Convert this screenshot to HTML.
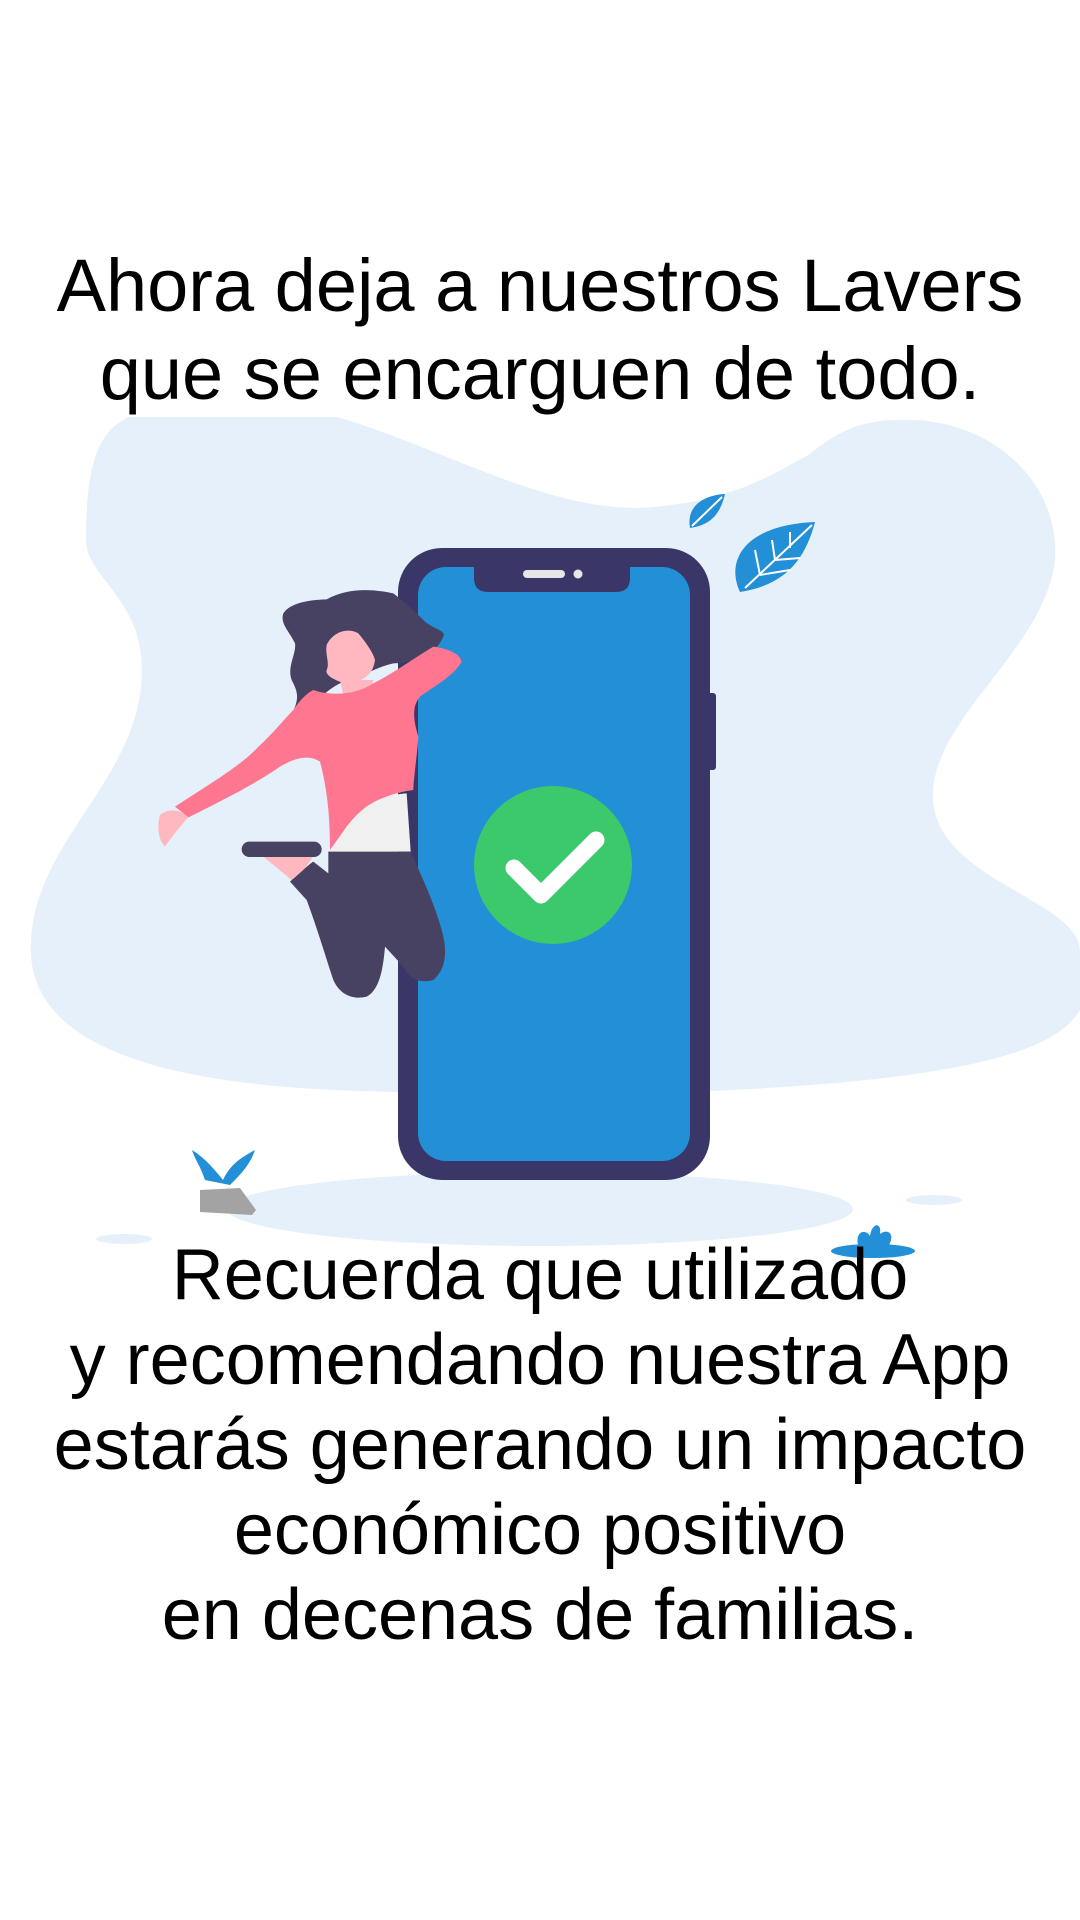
<!DOCTYPE html>
<html><head><meta charset="utf-8"><style>
html,body{margin:0;padding:0;background:#fff;}
body{width:1080px;height:1920px;position:relative;overflow:hidden;font-family:"Liberation Sans","DejaVu Sans",sans-serif;color:#000;}
.t{position:absolute;left:0;width:1080px;text-align:center;font-size:74px;line-height:88px;}
svg{position:absolute;left:0;top:0;}
</style></head><body>
<svg width="1080" height="1920" viewBox="0 0 1080 1920">
<path d="M129 417 L337 417 C450 450 560 520 663 506 C740 498 780 470 810 454 C850 420 880 420 908 420 C990 420 1060 480 1055 560 C1045 650 930 720 933 798 C935 880 1080 900 1080 951 L1080 1010 C1060 1043 1000 1080 687 1092 L405 1092 C200 1090 40 1060 31 957 C25 850 130 790 141 687 C150 600 86 580 86 540 C86 460 100 430 129 417 Z" fill="#e6f0fa"/>
<ellipse cx="540" cy="1209" rx="313" ry="37" fill="#e6f0fa"/>
<ellipse cx="124" cy="1239" rx="28" ry="5" fill="#e6f0fa"/>
<ellipse cx="934" cy="1200" rx="28" ry="5" fill="#e6f0fa"/>
<rect x="706" y="693" width="10" height="77" rx="3" fill="#3a3768"/>
<rect x="398" y="548" width="312" height="632" rx="44" fill="#3a3768"/>
<rect x="418" y="567" width="272" height="594" rx="28" fill="#228fd6"/>
<path d="M474 564 L630 564 L630 578 Q630 592 616 592 L488 592 Q474 592 474 578 Z" fill="#3a3768"/>
<rect x="523" y="570" width="42" height="8" rx="4" fill="#e6e6e6"/>
<circle cx="578" cy="574" r="4.5" fill="#e6e6e6"/>
<circle cx="553" cy="865" r="79" fill="#3bc96b"/>
<path d="M514 868 L541 895 L596 840" stroke="#fff" stroke-width="17" stroke-linecap="round" stroke-linejoin="round" fill="none"/>
<g fill="#228fd6">
<path d="M690 528 C686 505 705 495 725 494 C720 515 710 525 690 528 Z"/>
<path d="M740 592 C725 560 745 525 815 522 C805 560 785 585 740 592 Z"/>
</g>
<g stroke="#fff" stroke-width="2" fill="none">
<path d="M692 526 L722 497"/><path d="M745 588 L812 525 M760 575 L755 550 M775 560 L772 540 M790 548 L790 532 M760 575 L790 570 M775 560 L800 558"/>
</g>
<path d="M205 1180 C200 1165 195 1160 192 1150 C205 1158 215 1170 223 1180 C230 1165 240 1158 255 1150 C250 1165 240 1175 230 1185 Z" fill="#228fd6"/>
<path d="M200 1190 L240 1188 L256 1210 L252 1215 L200 1212 Z" fill="#a3a3a3"/>
<ellipse cx="873" cy="1251" rx="42" ry="7" fill="#228fd6"/>
<path d="M858 1245 C855 1232 865 1228 870 1236 C872 1222 882 1222 880 1234 C888 1228 896 1234 888 1247 Z" fill="#228fd6"/>
<g transform="translate(140,580) scale(0.33333)">
<path d="M430 100 C450 70 500 60 560 58 C620 25 690 25 760 40 C800 70 830 100 850 120 C880 150 920 150 910 170 C890 220 830 250 760 250 C720 260 700 270 660 290 L600 310 C560 330 530 360 520 390 L460 392 C480 350 470 330 455 300 C440 260 470 220 465 190 C445 150 420 130 430 100 Z" fill="#474261"/>
<path d="M600 300 L700 300 L690 345 Q650 355 610 345 Z" fill="#ffb8c0"/>
<path d="M560 195 C575 160 620 140 655 160 C680 190 700 220 705 240 C700 270 690 300 620 312 C580 300 555 285 560 270 C570 250 555 225 560 195 Z" fill="#ffb8c0"/>
<path d="M520 330 C560 345 640 350 700 310 C760 280 830 230 880 200 C920 205 960 220 965 245 C940 290 880 320 840 350 C815 380 820 420 835 470 C830 540 820 600 820 630 C750 640 690 660 620 740 L570 810 C570 700 560 620 540 545 C510 525 470 530 420 560 C350 610 230 670 145 712 L105 680 C180 630 300 560 350 505 C400 460 430 420 460 390 C480 360 500 340 520 330 Z" fill="#ff7690"/>
<path d="M60 705 C80 690 110 680 145 712 C120 740 95 770 75 800 C55 780 50 740 60 705 Z" fill="#ffb8c0"/>
<path d="M620 740 C680 660 740 645 800 640 L812 815 L570 815 Z" fill="#f0f0f0"/>
<path d="M370 830 L520 828 L480 890 L455 900 Z" fill="#ffb8c0"/>
<path d="M565 815 L812 815 C840 880 880 960 905 1050 C925 1120 915 1170 880 1200 C840 1210 810 1200 790 1160 L735 1100 C730 1160 720 1230 680 1250 C640 1260 600 1245 580 1200 C560 1140 530 1040 500 960 L450 905 C480 880 510 850 520 845 L565 880 Z" fill="#474261"/>
<rect x="305" y="785" width="240" height="46" rx="23" fill="#474261"/>
</g>
</svg>
<div class="t" style="top:242px;">Ahora deja a nuestros Lavers<br>que se encarguen de todo.</div>
<div class="t" style="top:1233px;line-height:85px;font-size:72px;">Recuerda que utilizado<br>y recomendando nuestra App<br>estarás generando un impacto<br>económico positivo<br>en decenas de familias.</div>
</body></html>
